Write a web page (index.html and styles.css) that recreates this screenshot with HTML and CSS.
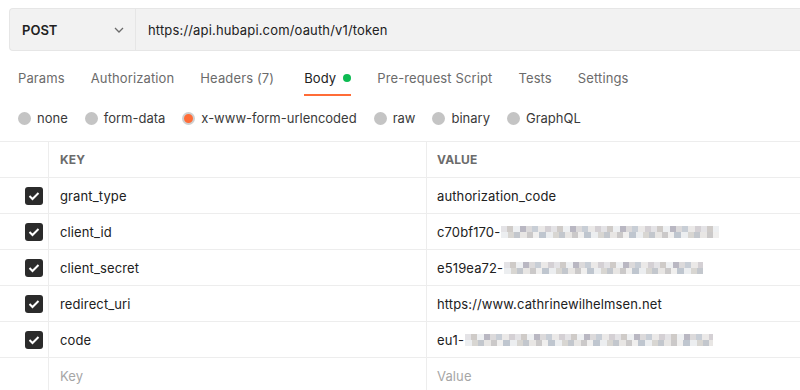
FILE: index.html
```html
<!DOCTYPE html>
<html lang="en">
<head>
    <meta charset="UTF-8" />
    <title>Request Body</title>
    <link rel="stylesheet" href="styles.css">
</head>
<body>
    <div class="url-bar">
        <div class="method">
            <span>POST</span>
            <svg class="chevron" width="10" height="6" viewBox="0 0 10 6"><polyline points="1,1 5,5 9,1" fill="none" stroke="#6b6b6b" stroke-width="1.3"/></svg>
        </div>
        <div class="url">https://api.hubapi.com/oauth/v1/token</div>
    </div>

    <div class="tabs">
        <div class="tab">Params</div>
        <div class="tab">Authorization</div>
        <div class="tab headers">Headers (7)</div>
        <div class="tab active">Body <span class="dot"></span></div>
        <div class="tab">Pre-request Script</div>
        <div class="tab">Tests</div>
        <div class="tab">Settings</div>
    </div>

    <div class="radios">
        <label class="radio"><span class="circle"></span>none</label>
        <label class="radio"><span class="circle"></span>form-data</label>
        <label class="radio"><span class="circle selected"></span>x-www-form-urlencoded</label>
        <label class="radio"><span class="circle"></span>raw</label>
        <label class="radio"><span class="circle"></span>binary</label>
        <label class="radio"><span class="circle"></span>GraphQL</label>
    </div>

    <div class="kv-table">
        <div class="row head">
            <div class="cell"></div>
            <div class="cell">KEY</div>
            <div class="cell">VALUE</div>
        </div>
        <div class="row">
            <div class="cell check"><span class="box"><svg width="12" height="10" viewBox="0 0 12 10"><polyline points="1.5,5 4.5,8 10.5,2" fill="none" stroke="#fff" stroke-width="2"/></svg></span></div>
            <div class="cell">grant_type</div>
            <div class="cell">authorization_code</div>
        </div>
        <div class="row">
            <div class="cell check"><span class="box"><svg width="12" height="10" viewBox="0 0 12 10"><polyline points="1.5,5 4.5,8 10.5,2" fill="none" stroke="#fff" stroke-width="2"/></svg></span></div>
            <div class="cell">client_id</div>
            <div class="cell">c70bf170-<span class="blur blur-id"></span></div>
        </div>
        <div class="row">
            <div class="cell check"><span class="box"><svg width="12" height="10" viewBox="0 0 12 10"><polyline points="1.5,5 4.5,8 10.5,2" fill="none" stroke="#fff" stroke-width="2"/></svg></span></div>
            <div class="cell">client_secret</div>
            <div class="cell">e519ea72-<span class="blur blur-secret"></span></div>
        </div>
        <div class="row">
            <div class="cell check"><span class="box"><svg width="12" height="10" viewBox="0 0 12 10"><polyline points="1.5,5 4.5,8 10.5,2" fill="none" stroke="#fff" stroke-width="2"/></svg></span></div>
            <div class="cell">redirect_uri</div>
            <div class="cell">https://www.cathrinewilhelmsen.net</div>
        </div>
        <div class="row">
            <div class="cell check"><span class="box"><svg width="12" height="10" viewBox="0 0 12 10"><polyline points="1.5,5 4.5,8 10.5,2" fill="none" stroke="#fff" stroke-width="2"/></svg></span></div>
            <div class="cell">code</div>
            <div class="cell">eu1-<span class="blur blur-code"></span></div>
        </div>
        <div class="row empty">
            <div class="cell"></div>
            <div class="cell">Key</div>
            <div class="cell">Value</div>
        </div>
    </div>
</body>
</html>
```

FILE: styles.css
```css
body {
    margin: 0;
    background: #fff;
    color: #212121;
    font-family: 'Inter', 'Noto Sans', sans-serif;
    font-size: 13px;
    letter-spacing: 0.12px;
    overflow: hidden;
}
.url-bar {
    display: flex;
    height: 43px;
    margin: 8px 0 0 9px;
    background: #f2f2f2;
    border: 1px solid #e6e6e6;
    border-right: none;
    border-radius: 4px 0 0 4px;
    box-sizing: border-box;
}
.method {
    width: 126px;
    display: flex;
    align-items: center;
    justify-content: space-between;
    padding: 0 11px 0 12px;
    box-sizing: border-box;
    border-right: 1px solid #e6e6e6;
    font-weight: 600;
    letter-spacing: 0;
}
.chevron {
    margin-top: 1px;
}
.url {
    display: flex;
    align-items: center;
    padding-left: 12px;
    letter-spacing: 0.16px;
}
.tabs {
    display: flex;
    gap: 26px;
    margin: 11px 0 0 18px;
}
.tab {
    padding: 8px 0;
    line-height: 16px;
    color: #6b6b6b;
    border-bottom: 2px solid transparent;
    display: flex;
    align-items: center;
}
.tab.headers {
    padding-right: 4px;
}
.tab.active {
    color: #212121;
    border-bottom-color: #ff6c37;
}
.dot {
    width: 8px;
    height: 8px;
    border-radius: 50%;
    background: #0cbb52;
    margin-left: 7px;
}
.radios {
    display: flex;
    gap: 17px;
    margin: 12px 0 0 18px;
    height: 20px;
    letter-spacing: 0;
}
.radio {
    display: flex;
    align-items: center;
    gap: 6px;
    color: #3a3a3a;
}
.circle {
    width: 13px;
    height: 13px;
    border-radius: 50%;
    background: #c4c4c4;
    box-sizing: border-box;
}
.circle.selected {
    background: #ff6c37;
    border: 2px solid #cfcfcf;
}
.kv-table {
    margin-top: 13px;
}
.row {
    display: grid;
    grid-template-columns: 48px 378px 1fr;
    height: 36px;
    border-top: 1px solid #ededed;
    box-sizing: border-box;
}
.cell {
    display: flex;
    align-items: center;
    padding: 0 11px;
    white-space: nowrap;
}
.cell + .cell {
    border-left: 1px solid #ededed;
}
.cell:last-child {
    padding-left: 10px;
}
.head .cell {
    font-size: 12px;
    font-weight: 700;
    color: #6b6b6b;
}
.empty .cell {
    color: #a6a6a6;
}
.check {
    justify-content: flex-end;
    padding: 0 5px 0 0;
}
.box {
    width: 18px;
    height: 18px;
    border-radius: 3px;
    background: #2b2b2b;
    display: flex;
    align-items: center;
    justify-content: center;
}
.blur {
    display: inline-block;
    height: 12px;
    margin-left: 1px;
    background:
        repeating-linear-gradient(90deg, #e4e3e6 0 6px, #cfcbc8 6px 12px, #eef0f2 12px 19px, #b9b7c2 19px 25px, #dcdadb 25px 31px, #c8ced6 31px 37px, #ebe9e8 37px 44px, #d4d0d4 44px 50px) 0 0 / 100% 6px no-repeat,
        repeating-linear-gradient(90deg, #eceef0 0 7px, #d8d6d2 7px 13px, #c3c7cd 13px 19px, #e8e6e4 19px 26px, #cbc9c9 26px 32px, #f0efee 32px 38px, #bfc6cf 38px 45px) 0 6px / 100% 6px no-repeat;
}
.blur-id {
    width: 218px;
}
.blur-secret {
    width: 199px;
}
.blur-code {
    width: 248px;
}
```
